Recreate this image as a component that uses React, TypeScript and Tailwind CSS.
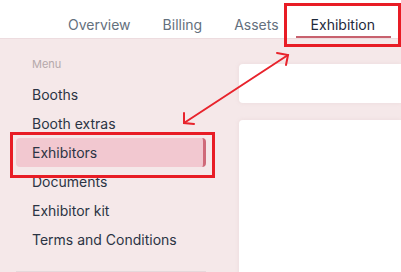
import React from 'react'

const tabs = ['Overview', 'Billing', 'Assets', 'Exhibition']
const menu = ['Booths', 'Booth extras', 'Exhibitors', 'Documents', 'Exhibitor kit', 'Terms and Conditions']

export default function App() {
  return (
    <div
      className="relative h-[272px] w-[401px] overflow-hidden bg-[#f5e8e9]"
      style={{ fontFamily: 'Inter, "Noto Sans", sans-serif' }}
    >
      {/* Header tabs */}
      <div className="flex h-[39px] items-stretch border-b border-[#eddcdf] bg-white pl-[52px]">
        {tabs.map(t => {
          const active = t === 'Exhibition'
          return (
            <div key={t} className="relative flex items-center px-[16px] pt-[11px]">
              <span className={`text-[14px] ${active ? 'text-[#1e293b]' : 'text-[#64707d]'}`}>{t}</span>
              {active && <div className="absolute bottom-[0px] left-[1px] right-[0px] h-[2px] bg-[#c8616e]" />}
            </div>
          )
        })}
      </div>

      <div className="flex">
        {/* Sidebar */}
        <div className="flex h-[233px] w-[222px] flex-col px-4 pt-[17px]">
          <p className="pl-4 text-[11px] leading-[16px] text-[#b4a9ab]">Menu</p>
          <div className="mt-[8px] flex flex-col">
            {menu.map(m => (
              <div
                key={m}
                className={`flex h-[29px] items-center pl-4 text-[14px] text-[#2b3444] ${
                  m === 'Exhibitors' ? 'rounded-[4px] border-r-[3px] border-[#cf6a79] bg-[#f2c8d0]' : ''
                }`}
              >
                {m}
              </div>
            ))}
          </div>
          <div className="mt-auto h-[1px] w-[190px] bg-[#e6d8db]" />
        </div>

        {/* Content */}
        <div className="flex flex-1 flex-col gap-[17px] pl-[17px] pt-[25px]">
          <div className="h-[39px] rounded-l-[4px] bg-white shadow-[0_0_4px_rgba(180,140,145,0.15)]" />
          <div className="h-[160px] rounded-l-[4px] bg-white shadow-[0_0_4px_rgba(180,140,145,0.15)]" />
        </div>
      </div>

      {/* Annotations */}
      <div className="absolute left-[284px] top-[3px] h-[44px] w-[117px] border-[3px] border-[#e81c25]" />
      <div className="absolute left-[10px] top-[132px] h-[46px] w-[205px] border-[3px] border-[#e81c25]" />
      <svg className="absolute left-0 top-0" width="401" height="272">
        <g stroke="#e8232c" strokeWidth="2" fill="none" strokeLinecap="round">
          <line x1="184" y1="123" x2="288" y2="55" />
          <polyline points="184,113 184,123 194,124" />
          <polyline points="277,53 288,55 286,65" />
        </g>
      </svg>
    </div>
  )
}
